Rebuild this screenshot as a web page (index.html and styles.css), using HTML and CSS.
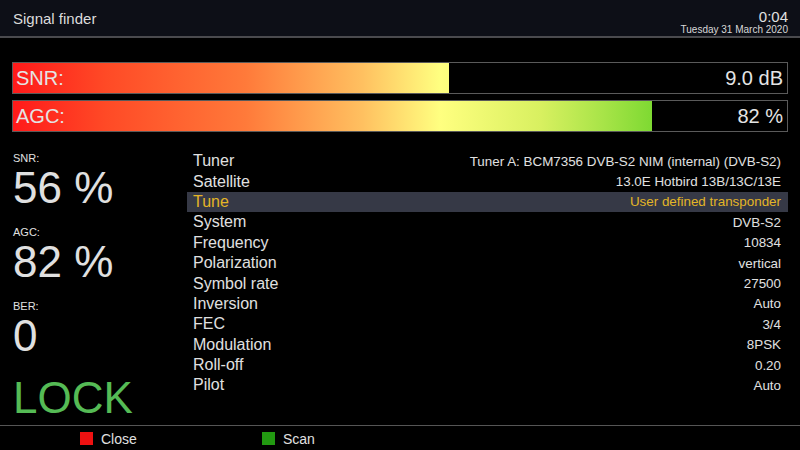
FILE: index.html
```html
<!DOCTYPE html>
<html lang="en">

<head>
    <meta charset="UTF-8">
    <title>Signal finder</title>
    <link rel="stylesheet" href="styles.css">
</head>

<body>
    <div class="header">
        <div class="title">Signal finder</div>
        <div class="clock">
            <div class="time">0:04</div>
            <div class="date">Tuesday 31 March 2020</div>
        </div>
    </div>

    <div class="bars">
        <div class="bar">
            <div class="bar-fill" style="width: 56.3%"></div>
            <span class="bar-label">SNR:</span>
            <span class="bar-value">9.0 dB</span>
        </div>
        <div class="bar">
            <div class="bar-fill" style="width: 82.6%"></div>
            <span class="bar-label">AGC:</span>
            <span class="bar-value">82 %</span>
        </div>
    </div>

    <div class="main">
        <div class="stats">
            <div class="stat-label">SNR:</div>
            <div class="stat-value">56 %</div>
            <div class="stat-label">AGC:</div>
            <div class="stat-value">82 %</div>
            <div class="stat-label">BER:</div>
            <div class="stat-value">0</div>
            <div class="lock">LOCK</div>
        </div>

        <div class="list">
            <div class="row"><span class="key">Tuner</span><span class="val">Tuner A: BCM7356 DVB-S2 NIM (internal) (DVB-S2)</span></div>
            <div class="row"><span class="key">Satellite</span><span class="val">13.0E Hotbird 13B/13C/13E</span></div>
            <div class="row selected"><span class="key">Tune</span><span class="val">User defined transponder</span></div>
            <div class="row"><span class="key">System</span><span class="val">DVB-S2</span></div>
            <div class="row"><span class="key">Frequency</span><span class="val">10834</span></div>
            <div class="row"><span class="key">Polarization</span><span class="val">vertical</span></div>
            <div class="row"><span class="key">Symbol rate</span><span class="val">27500</span></div>
            <div class="row"><span class="key">Inversion</span><span class="val">Auto</span></div>
            <div class="row"><span class="key">FEC</span><span class="val">3/4</span></div>
            <div class="row"><span class="key">Modulation</span><span class="val">8PSK</span></div>
            <div class="row"><span class="key">Roll-off</span><span class="val">0.20</span></div>
            <div class="row"><span class="key">Pilot</span><span class="val">Auto</span></div>
        </div>
    </div>

    <div class="footer">
        <div class="button"><span class="key-red"></span>Close</div>
        <div class="button"><span class="key-green"></span>Scan</div>
    </div>
</body>

</html>
```

FILE: styles.css
```css
* {
    box-sizing: border-box;
}

body {
    margin: 0;
    width: 800px;
    height: 450px;
    overflow: hidden;
    background: #000;
    color: #e0e0e0;
    font-family: "Liberation Sans", Arial, sans-serif;
}

.header {
    height: 38px;
    background: #0d0f17;
    border-bottom: 2px solid #4a4a4e;
    display: flex;
    justify-content: space-between;
    padding: 0 12px 0 13px;
}

.title {
    font-size: 15px;
    padding-top: 10px;
    color: #dcdcdc;
}

.clock {
    text-align: right;
    padding-top: 9px;
}

.time {
    font-size: 15px;
    line-height: 16px;
}

.date {
    font-size: 10px;
    line-height: 10px;
    color: #d8d8d8;
}

.bars {
    padding: 24px 12px 0 12px;
    display: flex;
    flex-direction: column;
    gap: 6px;
}

.bar {
    position: relative;
    height: 32px;
    border: 1px solid #5a5a5a;
    display: flex;
    justify-content: space-between;
    align-items: center;
    padding: 0 4px 0 3px;
    font-size: 20px;
}

.bar-fill {
    position: absolute;
    left: 0;
    top: 0;
    bottom: 0;
    background: linear-gradient(90deg, #ff1a1a 0%, #ff4a26 12%, #ff7a3a 30%, #ffc060 45%, #ffff80 55%, #d8f060 68%, #a8e448 76%, #7ad830 83%, #60d020 100%) 0 0 / 776px 100% no-repeat;
}

.bar-label,
.bar-value {
    position: relative;
    color: #e4e4e4;
}

.main {
    display: flex;
    padding-top: 17px;
    height: 293px;
}

.stats {
    width: 187px;
    padding-left: 13px;
}

.stat-label {
    font-size: 11px;
    line-height: 14px;
    margin-top: 2px;
}

.stat-value {
    font-size: 44px;
    line-height: 46px;
    margin-bottom: 14px;
}

.lock {
    font-size: 44px;
    line-height: 50px;
    color: #55bb55;
    margin-top: 14px;
}

.list {
    width: 601px;
    padding-top: 2px;
}

.row {
    height: 20.4px;
    display: flex;
    justify-content: space-between;
    align-items: center;
    padding: 0 7px 0 6px;
}

.key {
    font-size: 16px;
}

.val {
    font-size: 13.4px;
}

.selected {
    background: #363946;
    color: #e4b526;
}

.footer {
    border-top: 1px solid #555;
    height: 26px;
    display: flex;
    padding-left: 80px;
    font-size: 14px;
    align-items: center;
}

.button {
    display: flex;
    align-items: center;
    width: 182px;
}

.key-red,
.key-green {
    display: inline-block;
    width: 13px;
    height: 13px;
    margin-right: 8px;
}

.key-red {
    background: #ee1111;
}

.key-green {
    background: #229911;
}
```
